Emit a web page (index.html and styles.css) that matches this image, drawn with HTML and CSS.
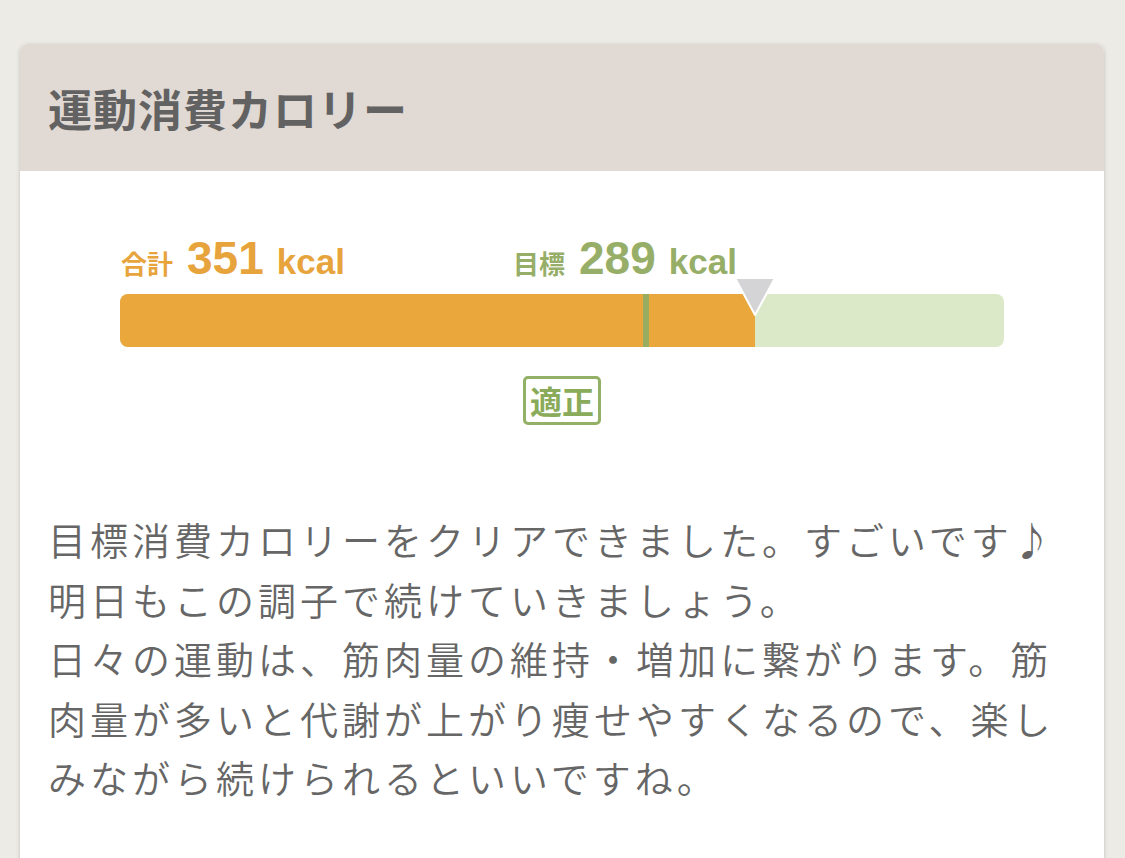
FILE: index.html
```html
<!DOCTYPE html>
<html lang="ja">
<head>
<meta charset="utf-8">
<link rel="stylesheet" href="styles.css">
</head>
<body>
<section class="card">
  <header class="card-header">
    <h2 class="card-title">運動消費カロリー</h2>
  </header>
  <div class="meter">
    <div class="labels">
      <div class="label total"><span class="label-name">合計</span><span class="label-num">351</span><span class="label-unit">kcal</span></div>
      <div class="label target" style="left: 393px"><span class="label-name">目標</span><span class="label-num">289</span><span class="label-unit">kcal</span></div>
    </div>
    <div class="bar">
      <div class="bar-fill" style="width: 71.83%">
        <span class="bar-goal" style="left: 82.36%"></span>
        <svg class="bar-pointer" width="44" height="40" viewBox="0 0 44 40"><polygon points="2,1 42,1 22,38" fill="#d4d4d7" stroke="#ffffff" stroke-width="2" stroke-linejoin="round"/></svg>
      </div>
    </div>
    <div class="status"><span class="badge">適正</span></div>
  </div>
  <p class="message">目標消費カロリーをクリアできました。すごいです♪<br>明日もこの調子で続けていきましょう。<br>日々の運動は、筋肉量の維持・増加に繋がります。筋肉量が多いと代謝が上がり痩せやすくなるので、楽しみながら続けられるといいですね。</p>
</section>
</body>
</html>
```
FILE: styles.css
```css
html, body {
  margin: 0;
  padding: 0;
}
body {
  background: #ecebe5;
  padding: 44px 21px 0 20px;
  font-family: "Noto Sans CJK JP", "Noto Sans", sans-serif;
  color: #666;
}
.card {
  width: 1084px;
  background: #fff;
  border-radius: 8px 8px 0 0;
  box-shadow: 0 1px 4px rgba(0, 0, 0, 0.18);
  min-height: 840px;
  overflow: hidden;
}
.card-header {
  height: 127px;
  background: #e1d9d4;
  display: flex;
  align-items: center;
  padding-left: 28px;
}
.card-title {
  margin: 0;
  font-size: 44px;
  font-weight: 700;
  color: #636262;
  letter-spacing: 1px;
  line-height: 1;
}
.meter {
  padding: 0 100px;
}
.labels {
  position: relative;
  height: 50px;
  margin-top: 62px;
}
.label {
  position: absolute;
  top: 0;
  display: flex;
  align-items: baseline;
  white-space: nowrap;
  line-height: 50px;
}
.label.total {
  left: 1px;
  color: #e8a43c;
}
.label.target {
  color: #97ae68;
}
.label-name {
  font-size: 26px;
  font-weight: 700;
  margin-right: 14px;
}
.label-num {
  font-family: "Liberation Sans", Arial, sans-serif;
  font-size: 46px;
  font-weight: 700;
  margin-right: 13px;
}
.label-unit {
  font-family: "Liberation Sans", Arial, sans-serif;
  font-size: 35px;
  font-weight: 700;
}
.bar {
  height: 53px;
  background: #dce9c8;
  border-radius: 8px;
  margin-top: 11px;
  position: relative;
}
.bar-fill {
  height: 100%;
  background: #e9a73c;
  border-radius: 8px 0 0 8px;
  position: relative;
}
.bar-goal {
  position: absolute;
  top: 0;
  bottom: 0;
  width: 6px;
  background: #98ad62;
}
.bar-pointer {
  position: absolute;
  right: -22px;
  top: -17px;
}
.status {
  display: flex;
  justify-content: center;
  margin-top: 29px;
}
.badge {
  display: inline-block;
  border: 3px solid #92b066;
  border-radius: 5px;
  color: #8aab5a;
  font-size: 32px;
  font-weight: 700;
  line-height: 43px;
  padding: 0 4px;
}
.message {
  margin: 84px 0 0;
  padding: 0 24px 0 28px;
  font-size: 38px;
  line-height: 59.5px;
  letter-spacing: 4px;
  color: #666;
  font-weight: 350;
}
```
